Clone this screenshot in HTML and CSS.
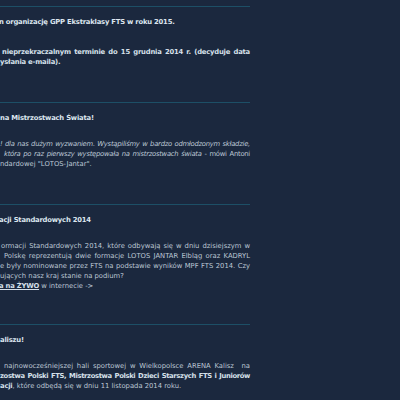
FILE: index.html
```html
<!DOCTYPE html>
<html lang="pl">
<head>
<meta charset="utf-8">
<title>Aktualności</title>
<link rel="stylesheet" href="styles.css">
</head>
<body>
<div class="feed">
  <article class="post post-first">
    <h2 class="title shift-1">n organizację GPP Ekstraklasy FTS w roku 2015.</h2>
    <div class="body">
      <p class="line just strong pad-2">nieprzekraczalnym terminie do 15 grudnia 2014 r. (decyduje data</p>
      <p class="line strong">ysłania e-maila).</p>
    </div>
  </article>

  <article class="post">
    <h2 class="title">na Mistrzostwach Świata!</h2>
    <div class="body">
      <p class="line just tight"><em>! dla nas dużym wyzwaniem. Wystąpiliśmy w bardzo odmłodzonym składzie,</em></p>
      <p class="line just tight pad-4"><em>która po raz pierwszy występowała na mistrzostwach świata</em> - mówi Antoni</p>
      <p class="line">ndardowej "LOTOS-Jantar".</p>
    </div>
  </article>

  <article class="post post-long">
    <h2 class="title shift-1">acji Standardowych 2014</h2>
    <div class="body">
      <p class="line just pad-1">ormacji Standardowych 2014, które odbywają się w dniu dzisiejszym w</p>
      <p class="line just pad-4">Polskę reprezentują dwie formacje LOTOS JANTAR Elbląg oraz KADRYL</p>
      <p class="line just">e były nominowane przez FTS na podstawie wyników MPF FTS 2014. Czy</p>
      <p class="line">ujących nasz kraj stanie na podium?</p>
      <p class="line shift-1"><a class="live" href="#">a na ŻYWO</a> w internecie -&gt;</p>
    </div>
  </article>

  <article class="post">
    <h2 class="title">aliszu!</h2>
    <div class="body">
      <p class="line just pad-4">najnowocześniejszej hali sportowej w Wielkopolsce ARENA Kalisz &nbsp;na</p>
      <p class="line just strong tighter">zostwa Polski FTS, Mistrzostwa Polski Dzieci Starszych FTS i Juniorów</p>
      <p class="line"><b class="bold">acji</b>, które odbędą się w dniu 11 listopada 2014 roku.</p>
    </div>
  </article>
</div>
</body>
</html>
```
FILE: styles.css
```css
html, body {
  margin: 0;
  padding: 0;
  background: #1b283e;
}

body {
  font-family: "DejaVu Sans", Verdana, sans-serif;
  font-size: 6.8px;
  line-height: 10px;
  color: #bcc7d4;
  overflow: hidden;
}

.feed {
  width: 250px;
  padding-top: 6px;
}

.post {
  border-top: 1px solid #1d4f66;
  padding: 10px 0 35px;
}

.post-long {
  padding-bottom: 33px;
}

.title {
  margin: 0 0 16px;
  font-size: inherit;
  line-height: 10px;
  font-weight: bold;
  letter-spacing: -0.2px;
  color: #dde6ef;
}

.post-first .title {
  margin-bottom: 20px;
}

.body {
  margin: 0;
}

.line {
  margin: 0;
}

.just {
  text-align: justify;
  text-align-last: justify;
}

.strong,
.bold {
  font-weight: bold;
  letter-spacing: -0.2px;
  color: #d6e0ea;
}

.tight {
  letter-spacing: -0.25px;
}

.strong.tighter {
  letter-spacing: -0.35px;
}

.line em {
  font-style: italic;
}

.live {
  color: #d6e0ea;
  font-weight: bold;
  letter-spacing: -0.2px;
  text-decoration: underline;
}

.pad-1 { padding-left: 1px; }
.pad-2 { padding-left: 2px; }
.pad-4 { padding-left: 4px; }
.shift-1 { margin-left: -1px; }
```
